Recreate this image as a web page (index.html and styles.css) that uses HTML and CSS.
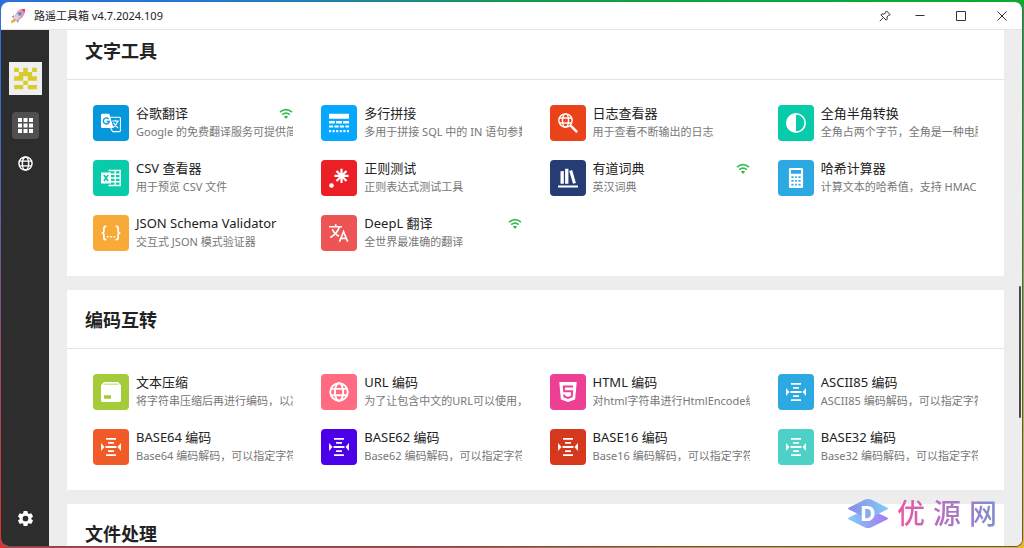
FILE: index.html
```html
<!DOCTYPE html>
<html lang="zh-CN">
<head>
<meta charset="utf-8">
<title>路遥工具箱</title>
<link rel="stylesheet" href="styles.css">
</head>
<body>
<svg class="defs" aria-hidden="true">
  <symbol id="wifi" viewBox="0 0 14 12"><path d="M1 4.2Q7-.8 13 4.2M3.200 6.700Q7 3.500 10.800 6.700" fill="none" stroke="currentColor" stroke-width="1.700"/><path d="M4.800 8.500Q7 6.800 9.200 8.500L7 11z" fill="currentColor"/></symbol>
  <symbol id="globe" viewBox="0 0 24 24"><g fill="none" stroke="currentColor" stroke-width="2.300"><circle cx="12" cy="12" r="10.500"/><ellipse cx="12" cy="12" rx="5" ry="10.500"/><path d="M2.500 8.200h19M2.500 15.800h19"/></g></symbol>
  <symbol id="base" viewBox="0 0 24 24"><g fill="currentColor"><path d="M6 1.200h12v2.200H6zM8.500 6h7v2.200h-7zM5.500 10.900h13v2.200h-13zM8.500 15.800h7V18h-7zM6 20.600h12v2.200H6zM0 7.200v9.600L4.200 12zM24 7.200v9.600L19.800 12z"/></g></symbol>
</svg>
<div class="window">
  <header class="titlebar">
    <svg class="rocket" viewBox="0 0 16 16"><path d="M4 7 1.500 9l2.500.8zM9 12l-1.200 3-1.500-2.500z" fill="#8c87b5"/><path d="M4 11.500Q6-.5 15 1q1 8-8.500 12z" fill="#ee8fa6"/><path d="M4 9.500 9.500 3l3 3.500-6 6z" fill="#d4d3e8"/><circle cx="9.800" cy="5.800" r="1.900" fill="#5f83bb"/><path d="M11.500 1.200 15 1l-.3 3.800z" fill="#dd3f73"/><path d="M4 10.500 6 13l-4.500 2.500L1 13z" fill="#e8ae42"/></svg>
    <h1 class="title">路遥工具箱 v4.7.2024.109</h1>
    <div class="controls">
      <button aria-label="置顶"><svg viewBox="0 0 12 12"><path d="M7.500.9 11.200 4.600 10.100 5.300 9.600 5.100 8 7 8.100 9.200 7.200 10.200 1.900 4.900 2.900 3.900 5 4.100 7 2.500 6.800 1.800zM4.300 7.600.8 11.200"/></svg></button>
      <button aria-label="最小化"><svg viewBox="0 0 12 12"><path d="M1.500 5.500h9"/></svg></button>
      <button aria-label="最大化"><svg viewBox="0 0 12 12"><path d="M1.500 1.500h9v9h-9z"/></svg></button>
      <button aria-label="关闭"><svg viewBox="0 0 12 12"><path d="m1.500 1.500 9 9M10.500 1.500l-9 9"/></svg></button>
    </div>
  </header>
  <div class="body">
    <nav class="sidebar">
      <svg class="avatar" viewBox="0 0 32 32"><path d="M0 0h32v32H0z" fill="#efefef"/><path d="M5 5.500h4.500v4.200H5zM13.800 5.500h4.400v4.200h-4.400zM22.500 5.500H27v4.200h-4.500zM9.500 9.700h13v4.200h-13zM5 13.900h8.800v4.200H5zM18.200 13.900H27v4.200h-8.800zM13.800 18.100h4.400v4.200h-4.400zM5 22.300h8.800v4.200H5zM18.200 22.300H27v4.200h-8.800z" fill="#d9cb2b"/></svg>
      <button class="nav active" aria-label="全部工具"><svg viewBox="0 0 15 15"><path d="M0 0h4v4H0zM5.500 0h4v4h-4zM11 0h4v4h-4zM0 5.500h4v4H0zM5.500 5.500h4v4h-4zM11 5.500h4v4h-4zM0 11h4v4H0zM5.500 11h4v4h-4zM11 11h4v4h-4z" fill="currentColor"/></svg></button>
      <button class="nav" aria-label="网络"><svg><use href="#globe"/></svg></button>
      <button class="nav settings" aria-label="设置"><svg viewBox="2 2 20 20"><path fill="currentColor" fill-rule="evenodd" d="M9.500 2h5l.6 3 1.600.9 2.900-1 2.500 4.300-2.300 2v1.700l2.300 2-2.500 4.300-2.900-1-1.600.9-.6 3h-5l-.6-3-1.600-.9-2.900 1-2.500-4.300 2.300-2v-1.700l-2.300-2 2.500-4.300 2.900 1 1.600-.9zM12 8.200a3.800 3.800 0 1 0 0 7.600 3.800 3.800 0 0 0 0-7.600z"/></svg></button>
    </nav>
    <main class="content">
      <section class="panel">
        <h2>文字工具</h2>
        <div class="grid">
          <button class="tool"><span class="icon blue"><svg viewBox="0 0 24 24"><path d="M11 5h11a1.300 1.300 0 0 1 1.300 1.300V21a1.300 1.300 0 0 1-1.300 1.300h-8L11.500 18" fill="none" stroke="currentColor" stroke-width="1.300"/><path d="M1.500 1H10l5 17H1.500A1.500 1.500 0 0 1 0 16.500v-14A1.500 1.500 0 0 1 1.500 1z" fill="currentColor"/><path d="M9.200 7.200A3.600 3.600 0 1 0 10 10.200H6.800" fill="none" stroke="#0797dc" stroke-width="1.600"/><path d="M13.500 9.500h8M17.300 8v1.500M20 9.500q-1 5-5.500 7.500M15 11.500q2 4 5.500 6.500" fill="none" stroke="currentColor" stroke-width="1.300"/></svg></span><span class="text"><span class="name">谷歌翻译<svg class="wifi"><use href="#wifi"/></svg></span><span class="desc">Google 的免费翻译服务可提供简</span></span></button>
          <button class="tool"><span class="icon sky"><svg viewBox="0 0 24 24"><path fill="currentColor" d="M0 1h24v6H0zM0 9.500h7v3H0zM8.500 9.500h7v3h-7zM17 9.500h7v3h-7zM0 15h5v2.500H0zM6.500 15h5v2.500h-5zM13 15h5v2.500h-5zM19.500 15H24v2.500h-4.500zM0 20.500h2.500V23H0zM4.300 20.500h2.500V23H4.300zM8.600 20.500h2.500V23H8.600zM12.900 20.500h2.500V23h-2.500zM17.200 20.500h2.500V23h-2.500zM21.500 20.500H24V23h-2.500z"/></svg></span><span class="text"><span class="name">多行拼接</span><span class="desc">多用于拼接 SQL 中的 IN 语句参数</span></span></button>
          <button class="tool"><span class="icon flame"><svg viewBox="0 0 24 24"><g fill="none" stroke="currentColor" stroke-width="1.700"><circle cx="9" cy="9" r="8"/><ellipse cx="9" cy="9" rx="3.600" ry="8"/><path d="M2 6h14M2 12h14"/><path d="m14.500 14.500 8.500 8.500" stroke-width="3"/></g></svg></span><span class="text"><span class="name">日志查看器</span><span class="desc">用于查看不断输出的日志</span></span></button>
          <button class="tool"><span class="icon mint"><svg viewBox="0 0 24 24"><circle cx="12" cy="12" r="11" fill="none" stroke="currentColor" stroke-width="2"/><path d="M12 1a11 11 0 0 0 0 22z" fill="currentColor"/></svg></span><span class="text"><span class="name">全角半角转换</span><span class="desc">全角占两个字节，全角是一种电脑</span></span></button>
          <button class="tool"><span class="icon mint"><svg viewBox="0 0 24 24"><path d="M9 3h14v18H9M9 7.500h14M9 12h14M9 16.500h14M17 3v18" fill="none" stroke="currentColor" stroke-width="1.700"/><path d="M0 5.500h12v13H0z" fill="currentColor"/><path d="m3.500 8.500 5 7M8.500 8.500l-5 7" stroke="#07cba9" stroke-width="2"/></svg></span><span class="text"><span class="name">CSV 查看器</span><span class="desc">用于预览 CSV 文件</span></span></button>
          <button class="tool"><span class="icon red"><svg viewBox="0 0 24 24"><circle cx="3" cy="21" r="2.800" fill="currentColor"/><path d="M15 1v17M6.500 9.500h17M9 3.500l12 12M21 3.500l-12 12" stroke="currentColor" stroke-width="2.600"/></svg></span><span class="text"><span class="name">正则测试</span><span class="desc">正则表达式测试工具</span></span></button>
          <button class="tool"><span class="icon navy"><svg viewBox="0 0 24 24"><path fill="currentColor" d="M0 21h24v2.500H0zM3 4l4-.5V19H3zM8.500 1h4v18h-4zM13.500 3.500l3.500-1 4.500 15.500-3.500 1z"/></svg></span><span class="text"><span class="name">有道词典<svg class="wifi"><use href="#wifi"/></svg></span><span class="desc">英汉词典</span></span></button>
          <button class="tool"><span class="icon azure"><svg viewBox="0 0 24 24"><path fill="currentColor" fill-rule="evenodd" d="M5 0h14a1.500 1.500 0 0 1 1.500 1.500v21A1.500 1.500 0 0 1 19 24H5a1.500 1.500 0 0 1-1.500-1.500v-21A1.500 1.500 0 0 1 5 0zM6 2.500v4.500h12V2.500zM6.500 10v2H9v-2zM11 10v2h2v-2zM15 10v2h2.500v-2zM6.500 14.500v2H9v-2zM11 14.500v2h2v-2zM15 14.500v2h2.500v-2zM6.500 19v2H9v-2zM11 19v2h2v-2zM15 19v2h2.500v-2z"/></svg></span><span class="text"><span class="name">哈希计算器</span><span class="desc">计算文本的哈希值，支持 HMAC</span></span></button>
          <button class="tool"><span class="icon amber"><svg viewBox="0 0 24 24"><path d="M6.500 4H5.500Q3.500 4 3.500 6v3.500Q3.500 12 .8 12 3.500 12 3.500 14.500V18q0 2 2 2h1M17.500 4h1q2 0 2 2v3.500q0 2.500 2.700 2.500-2.700 0-2.700 2.500V18q0 2-2 2h-1" fill="none" stroke="currentColor" stroke-width="2"/><path d="M7 15.500h2v2H7zM11 15.500h2v2h-2zM15 15.500h2v2h-2z" fill="currentColor"/></svg></span><span class="text"><span class="name">JSON Schema Validator</span><span class="desc">交互式 JSON 模式验证器</span></span></button>
          <button class="tool"><span class="icon coral"><svg viewBox="0 0 24 24"><path d="M0 4.500h15.500M8 1.500v3M12.500 4.500Q10.500 12 1.500 17.500M4 7.500q2 5 8 8.500M12.500 22.500l5-12 5 12M14 18.500h7" fill="none" stroke="currentColor" stroke-width="2"/></svg></span><span class="text"><span class="name">DeepL 翻译<svg class="wifi"><use href="#wifi"/></svg></span><span class="desc">全世界最准确的翻译</span></span></button>
        </div>
      </section>
      <section class="panel">
        <h2>编码互转</h2>
        <div class="grid">
          <button class="tool"><span class="icon lime"><svg viewBox="0 0 24 24"><path fill="currentColor" fill-rule="evenodd" d="M3.500 0h17L24 4v18a2 2 0 0 1-2 2H2a2 2 0 0 1-2-2V4zM3.500 2 2.700 3h18.600l-.8-1zM3.500 16v4H12v-4z"/></svg></span><span class="text"><span class="name">文本压缩</span><span class="desc">将字符串压缩后再进行编码，以减</span></span></button>
          <button class="tool"><span class="icon rose"><svg><use href="#globe"/></svg></span><span class="text"><span class="name">URL 编码</span><span class="desc">为了让包含中文的URL可以使用，</span></span></button>
          <button class="tool"><span class="icon pink"><svg viewBox="0 0 24 24"><path d="M1.500 0h21l-2 21L12 24l-8.500-3z" fill="currentColor"/><path d="M18 5.500H7l.5 5.500h9.500l-.6 6.500L12 19l-4.300-1.500-.2-2.500" fill="none" stroke="#ed4094" stroke-width="2.400"/></svg></span><span class="text"><span class="name">HTML 编码</span><span class="desc">对html字符串进行HtmlEncode编</span></span></button>
          <button class="tool"><span class="icon azure"><svg><use href="#base"/></svg></span><span class="text"><span class="name">ASCII85 编码</span><span class="desc">ASCII85 编码解码，可以指定字符</span></span></button>
          <button class="tool"><span class="icon orange"><svg><use href="#base"/></svg></span><span class="text"><span class="name">BASE64 编码</span><span class="desc">Base64 编码解码，可以指定字符</span></span></button>
          <button class="tool"><span class="icon violet"><svg><use href="#base"/></svg></span><span class="text"><span class="name">BASE62 编码</span><span class="desc">Base62 编码解码，可以指定字符</span></span></button>
          <button class="tool"><span class="icon brick"><svg><use href="#base"/></svg></span><span class="text"><span class="name">BASE16 编码</span><span class="desc">Base16 编码解码，可以指定字符</span></span></button>
          <button class="tool"><span class="icon teal"><svg><use href="#base"/></svg></span><span class="text"><span class="name">BASE32 编码</span><span class="desc">Base32 编码解码，可以指定字符</span></span></button>
        </div>
      </section>
      <section class="panel">
        <h2>文件处理</h2>
      </section>
    </main>
    <div class="scroll-thumb"></div>
  </div>
  <div class="watermark">
    <svg viewBox="0 0 40 30"><defs><linearGradient id="ga" x1="0" x2="1"><stop stop-color="#8b8bea"/><stop offset="1" stop-color="#83cbf5"/></linearGradient><linearGradient id="gb" x1="0" x2="1"><stop stop-color="#83cbf5"/><stop offset="1" stop-color="#a678f5"/></linearGradient></defs><path d="M17 29 1 21q-2-1 0-2l16-8q3-1 6 0l16 8q2 1 0 2l-16 8q-3 1-6 0z" fill="url(#gb)"/><path d="M17 1 1 9q-2 1 0 2l16 8q3 1 6 0l16-8q2-1 0-2L23 1q-3-1-6 0z" fill="url(#ga)"/><text x="12" y="22" class="mark">D</text></svg>
    <span class="word"><span>优</span><span>源</span><span>网</span></span>
  </div>
</div>
</body>
</html>
```
FILE: styles.css
```css
* { box-sizing: border-box; }
body {
  margin: 0;
  height: 100vh;
  padding: 2px 1px 1px;
  background: conic-gradient(#149a50, #0bab31 62deg, #eeb422 118deg, #e89a22 135deg, #d8352c 200deg, #e0322a 242deg, #2f6fd8 290deg, #2674d4 310deg, #149a50);
  font-family: "Noto Sans", "Noto Sans CJK SC", sans-serif;
  color: #222;
}
button {
  margin: 0;
  padding: 0;
  border: 0;
  background: none;
  font: inherit;
  color: inherit;
  text-align: left;
}
svg { display: block; }
.defs { position: absolute; width: 0; height: 0; }
.window {
  position: relative;
  height: 100%;
  display: flex;
  flex-direction: column;
  overflow: hidden;
  border-radius: 8px;
  border-bottom: 1px solid #555b66;
  border-right: 1px solid #555b66;
  background: #fff;
}
.titlebar {
  flex: none;
  display: flex;
  align-items: center;
  height: 28px;
  padding-left: 9px;
  border-bottom: 1px solid #e4e4e4;
}
.rocket { width: 16px; height: 16px; }
.title {
  margin: 0 auto 0 8px;
  font-size: 11px;
  line-height: 16px;
  font-weight: 400;
}
.controls { display: flex; }
.controls button {
  display: grid;
  place-items: center;
  width: 41px;
  height: 26px;
}
.controls button:first-child { width: 28px; }
.controls svg {
  width: 12px;
  height: 12px;
  fill: none;
  stroke: #333;
}
.body {
  position: relative;
  flex: 1;
  min-height: 0;
  display: flex;
}
.sidebar {
  flex: none;
  width: 48px;
  padding: 32px 0 14px;
  display: flex;
  flex-direction: column;
  align-items: center;
  gap: 11px;
  background: #2d2d2d;
  color: #fff;
}
.avatar { width: 33px; height: 33px; margin-bottom: 6px; }
.nav {
  display: grid;
  place-items: center;
  width: 27px;
  height: 27px;
  border-radius: 4px;
}
.nav.active { background: #505050; }
.nav svg { width: 15px; height: 15px; }
.settings { margin-top: auto; }
.content {
  flex: 1;
  min-width: 0;
  overflow: hidden;
  padding: 0 18px;
  background: #ededed;
}
.panel { margin-bottom: 14px; background: #fff; }
.panel:first-child { margin-top: -9px; }
.panel h2 {
  margin: 0;
  padding: 16px 18px 14px;
  border-bottom: 1px solid #e3e3e3;
  font-size: 18px;
  line-height: 28px;
  font-weight: 700;
}
.grid {
  display: grid;
  grid-template-columns: repeat(4, minmax(0, 1fr));
  gap: 19px 28px;
  padding: 25px 26px;
}
.tool { display: flex; gap: 7px; min-width: 0; }
.icon {
  flex: none;
  display: grid;
  place-items: center;
  width: 36px;
  height: 36px;
  border-radius: 4px;
  color: #fff;
}
.icon svg { width: 20px; height: 20px; }
.text { flex: 1; min-width: 0; }
.name {
  display: flex;
  justify-content: space-between;
  font-size: 13px;
  line-height: 17px;
  white-space: nowrap;
}
.wifi { width: 14px; height: 12px; margin-top: 3px; color: #35bd52; }
.desc {
  display: block;
  overflow: hidden;
  white-space: nowrap;
  font-size: 11px;
  line-height: 19px;
  color: #777;
}
.blue { background: #0797dc; }
.sky { background: #06a7ff; }
.flame { background: #ea4319; }
.mint { background: #07cba9; }
.red { background: #eb2027; }
.navy { background: #263c74; }
.azure { background: #2ca8e2; }
.amber { background: #f7aa37; }
.coral { background: #ef5455; }
.lime { background: #a4cb39; }
.rose { background: #ff6b81; }
.pink { background: #ed4094; }
.orange { background: #f05b28; }
.violet { background: #4c00e8; }
.brick { background: #d6381d; }
.teal { background: #4dd0c5; }
.scroll-thumb {
  position: absolute;
  right: 1px;
  top: 256px;
  width: 2px;
  height: 132px;
  border-radius: 1px;
  background: #4a4a4a;
}
.watermark {
  position: absolute;
  right: 25px;
  bottom: 17px;
  display: flex;
  align-items: center;
  gap: 9px;
}
.watermark svg { width: 40px; height: 31px; }
.mark { font-size: 21px; font-weight: 700; fill: #fff; }
.word {
  display: flex;
  gap: 8px;
  font-size: 28px;
  line-height: 32px;
  font-weight: 500;
  background: linear-gradient(90deg, #f0559f, #b072c4 50%, #8090cc);
  -webkit-background-clip: text;
  background-clip: text;
  color: transparent;
}
```
